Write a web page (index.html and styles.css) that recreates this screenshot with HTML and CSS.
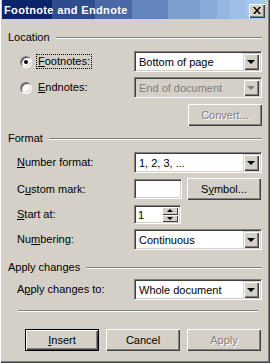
FILE: index.html
```html
<!DOCTYPE html>
<html lang="en">
<head>
    <meta charset="UTF-8">
    <title>Footnote and Endnote</title>
    <link rel="stylesheet" href="styles.css">
</head>
<body>

<div class="window">
    <div class="titlebar">
        <span class="title">Footnote and Endnote</span>
        <div class="close-btn">
            <svg width="8" height="7" viewBox="0 0 8 7">
                <path d="M0 0h2l2 2.5L6 0h2L5 3.5 8 7H6L4 4.5 2 7H0l3-3.5z" fill="#000"/>
            </svg>
        </div>
    </div>

    <div class="content">
        <div class="group-head"><span>Location</span><div class="etch"></div></div>

        <div class="row row-first">
            <div class="radio checked"></div>
            <span class="label radio-label focus"><u>F</u>ootnotes:</span>
            <div class="select">
                <span class="select-text">Bottom of page</span>
                <div class="arrow"><i></i></div>
            </div>
        </div>

        <div class="row">
            <div class="radio"></div>
            <span class="label radio-label"><u>E</u>ndnotes:</span>
            <div class="select disabled">
                <span class="select-text">End of document</span>
                <div class="arrow"><i></i></div>
            </div>
        </div>

        <div class="row row-btn">
            <div class="btn disabled">Convert...</div>
        </div>

        <div class="group-head head-format"><span>Format</span><div class="etch"></div></div>

        <div class="row row-first">
            <span class="label"><u>N</u>umber format:</span>
            <div class="select">
                <span class="select-text">1, 2, 3, ...</span>
                <div class="arrow"><i></i></div>
            </div>
        </div>

        <div class="row">
            <span class="label">C<u>u</u>stom mark:</span>
            <div class="textbox"></div>
            <div class="btn btn-symbol">S<u>y</u>mbol...</div>
        </div>

        <div class="row">
            <span class="label"><u>S</u>tart at:</span>
            <div class="spin">
                <span class="spin-text">1</span>
                <div class="spin-btns">
                    <div class="spin-btn"><i class="up"></i></div>
                    <div class="spin-btn"><i></i></div>
                </div>
            </div>
        </div>

        <div class="row">
            <span class="label">Nu<u>m</u>bering:</span>
            <div class="select">
                <span class="select-text">Continuous</span>
                <div class="arrow"><i></i></div>
            </div>
        </div>

        <div class="group-head head-apply"><span>Apply changes</span><div class="etch"></div></div>

        <div class="row row-apply">
            <span class="label">A<u>p</u>ply changes to:</span>
            <div class="select">
                <span class="select-text">Whole document</span>
                <div class="arrow"><i></i></div>
            </div>
        </div>

        <div class="etch separator"></div>

        <div class="buttons">
            <div class="btn default"><u>I</u>nsert</div>
            <div class="btn">Cancel</div>
            <div class="btn disabled">Apply</div>
        </div>
    </div>
</div>

</body>
</html>
```

FILE: styles.css
```css
body {
    margin: 0;
    font-family: 'Liberation Sans', Arial, sans-serif;
    font-size: 11px;
    color: #000;
    background-color: #d4d0c8;
}

u {
    text-decoration: underline;
    text-underline-offset: 1px;
}

/* Window frame */
.window {
    width: 270px;
    height: 363px;
    box-sizing: border-box;
    padding: 0 4px 3px 2px;
    background-color: #d4d0c8;
    box-shadow: inset 1px 0 #fff, inset -1px -1px #404040, inset -2px -2px #808080;
    display: flex;
    flex-direction: column;
}

.titlebar {
    height: 19px;
    display: flex;
    align-items: flex-start;
    background: linear-gradient(to right,
        #0a246a 0 50px,
        #2e4c8e 50px 93px,
        #4a69a6 93px 130px,
        #6285bd 130px 166px,
        #7a9ece 166px 198px,
        #88acd8 198px 215px,
        #94b6e0 215px 228px,
        #9ec0e8 228px 245px,
        #a6caf0 245px);
}

.title {
    color: #fff;
    font-weight: bold;
    font-size: 11px;
    line-height: 13px;
    letter-spacing: 0.35px;
    padding: 4px 0 0 2px;
}

.close-btn {
    margin: 4px 1px 0 auto;
    width: 16px;
    height: 14px;
    box-sizing: border-box;
    background-color: #d4d0c8;
    box-shadow: inset 1px 1px #fff, inset -1px -1px #404040, inset -2px -2px #808080;
    display: flex;
    justify-content: center;
    align-items: center;
    padding: 0 1px 1px 0;
}

.content {
    display: flex;
    flex-direction: column;
    padding: 0 4px 0 6px;
}

/* Group headers */
.group-head {
    display: flex;
    align-items: center;
    gap: 6px;
    height: 13px;
    line-height: 13px;
    margin-top: 12px;
}

.etch {
    flex: 1;
    height: 0;
    border-top: 1px solid #808080;
    border-bottom: 1px solid #fff;
}

.head-format {
    margin-top: 6px;
}

.head-apply {
    margin-top: 11px;
}

/* Rows */
.row {
    display: flex;
    align-items: center;
    margin-top: 5px;
    padding-left: 9px;
}

.row-first {
    margin-top: 7px;
}

.row-btn {
    justify-content: flex-end;
    margin-top: 6px;
}

.row-apply {
    margin-top: 5px;
}

.label {
    width: 117px;
    line-height: 13px;
}

.radio-label {
    width: auto;
    margin-left: 5px;
    padding: 0 1px;
}

.radio-label.focus {
    outline: 1px dotted #000;
}

.row .radio + .radio-label + .select {
    margin-left: auto;
}

.radio {
    width: 12px;
    height: 12px;
    box-sizing: border-box;
    border-radius: 50%;
    border: 1px solid;
    border-color: #808080 #fff #fff #808080;
    box-shadow: inset 1px 1px #404040, inset -1px -1px #d4d0c8;
    background-color: #fff;
    margin-left: 3px;
    display: flex;
    justify-content: center;
    align-items: center;
}

.radio.checked::after {
    content: '';
    width: 4px;
    height: 4px;
    border-radius: 50%;
    background-color: #000;
}

/* Sunken fields */
.select,
.textbox,
.spin {
    height: 21px;
    box-sizing: border-box;
    border: 1px solid;
    border-color: #808080 #fff #fff #808080;
    box-shadow: inset 1px 1px #404040, inset -1px -1px #d4d0c8;
    background-color: #fff;
    display: flex;
    align-items: center;
}

.select {
    width: 128px;
    padding: 2px;
}

.select-text {
    flex: 1;
    padding-left: 2px;
}

.select.disabled {
    background-color: #d4d0c8;
}

.select.disabled .select-text {
    color: #808080;
}

.arrow {
    width: 16px;
    height: 17px;
    box-sizing: border-box;
    background-color: #d4d0c8;
    box-shadow: inset 1px 1px #d4d0c8, inset 2px 2px #fff, inset -1px -1px #404040, inset -2px -2px #808080;
    display: flex;
    justify-content: center;
    align-items: center;
}

.arrow i,
.spin-btn i {
    width: 0;
    height: 0;
    border-left: 4px solid transparent;
    border-right: 4px solid transparent;
    border-top: 4px solid #000;
}

.select.disabled .arrow i {
    border-top-color: #808080;
}

.textbox {
    width: 48px;
    height: 20px;
}

.spin {
    width: 47px;
    height: 19px;
    padding: 2px 2px 2px 0;
}

.spin-text {
    flex: 1;
    padding-left: 3px;
}

.spin-btns {
    display: flex;
    flex-direction: column;
    width: 16px;
    height: 15px;
}

.spin-btn {
    flex: 1;
    background-color: #d4d0c8;
    box-shadow: inset 1px 1px #fff, inset -1px -1px #404040;
    display: flex;
    justify-content: center;
    align-items: center;
}

.spin-btn i {
    border-left-width: 3px;
    border-right-width: 3px;
    border-top-width: 3px;
}

.spin-btn i.up {
    border-top: none;
    border-bottom: 3px solid #000;
}

/* Buttons */
.btn {
    width: 74px;
    height: 22px;
    box-sizing: border-box;
    background-color: #d4d0c8;
    box-shadow: inset 1px 1px #fff, inset -1px -1px #404040, inset -2px -2px #808080;
    display: flex;
    justify-content: center;
    align-items: center;
    padding-bottom: 1px;
}

.btn.disabled {
    color: #808080;
    text-shadow: 1px 1px #fff;
}

.btn-symbol {
    margin-left: 5px;
}

.btn.default {
    box-shadow: inset 0 0 0 1px #000, inset 2px 2px #fff, inset -2px -2px #404040, inset -3px -3px #808080;
}

.separator {
    flex: none;
    margin: 10px 4px 0 10px;
}

.buttons {
    display: flex;
    gap: 7px;
    margin-top: 17px;
    padding-left: 17px;
}
```
